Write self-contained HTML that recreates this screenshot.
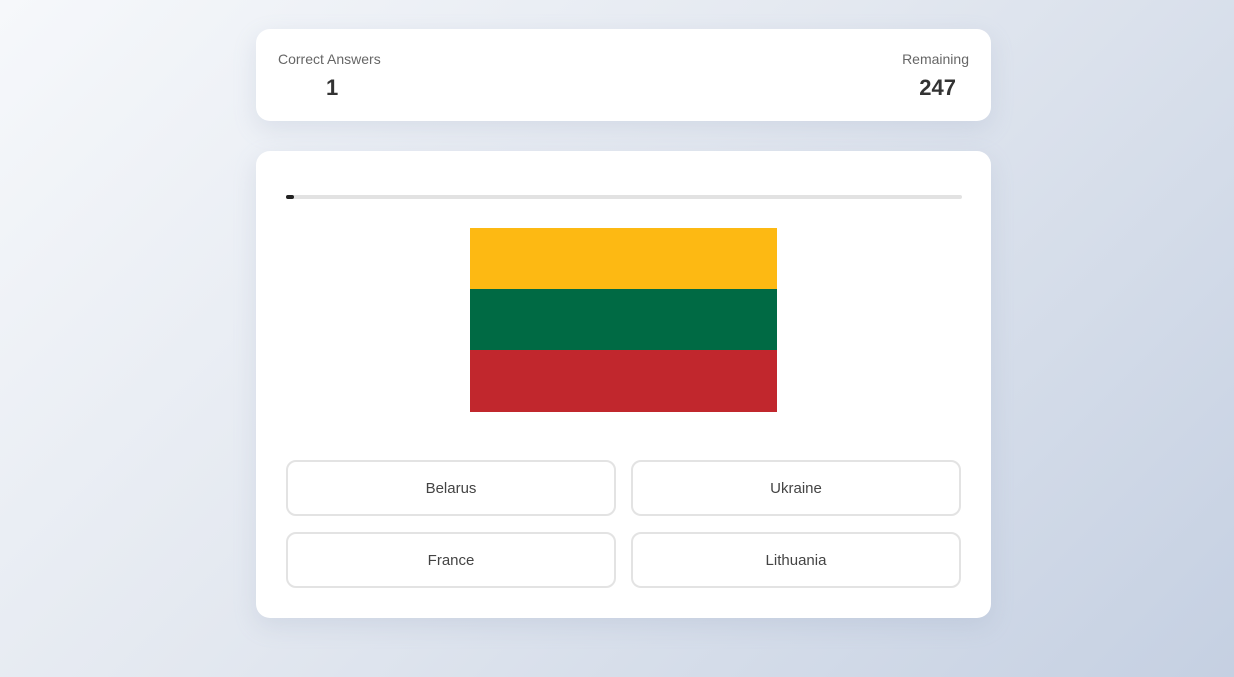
<!DOCTYPE html>
<html><head><style>
*{margin:0;padding:0;box-sizing:border-box}
body{width:1234px;height:677px;overflow:hidden;font-family:"Liberation Sans",sans-serif;background:linear-gradient(135deg,#f6f8fb 0%,#e3e8f0 45%,#c5d0e2 100%);position:relative}
.card{position:absolute;left:256px;width:735px;background:#fff;border-radius:14px;box-shadow:0 8px 24px rgba(140,155,185,.2)}
.lbl{position:absolute;font-size:14px;color:#666}
.num{position:absolute;font-size:22px;font-weight:bold;color:#333}
.btn{position:absolute;width:330px;height:56px;border:2px solid #e3e3e3;border-radius:10px;display:flex;align-items:center;justify-content:center;font-size:15px;color:#444;background:#fff}
</style></head><body>
<div class="card" style="top:29px;height:92px">
<div class="lbl" style="left:22px;top:22px">Correct Answers</div>
<div class="num" style="left:70px;top:46px">1</div>
<div class="lbl" style="right:22px;top:22px">Remaining</div>
<div class="num" style="right:35px;top:46px">247</div>
</div>
<div class="card" style="top:151px;height:467px">
<div style="position:absolute;left:30px;top:44px;width:676px;height:4px;background:#e2e2e2;border-radius:2px"></div>
<div style="position:absolute;left:30px;top:44px;width:8px;height:4px;background:#222;border-radius:2px"></div>
<div style="position:absolute;left:214px;top:77px;width:307px;height:184px">
<div style="height:61px;background:#fdb913"></div>
<div style="height:61px;background:#006a44"></div>
<div style="height:62px;background:#c1272d"></div>
</div>
</div>
<div class="btn" style="left:286px;top:460px">Belarus</div>
<div class="btn" style="left:631px;top:460px">Ukraine</div>
<div class="btn" style="left:286px;top:532px">France</div>
<div class="btn" style="left:631px;top:532px">Lithuania</div>
</body></html>
